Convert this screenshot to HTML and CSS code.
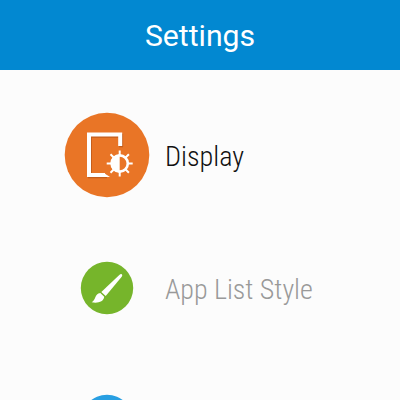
FILE: index.html
```
<!DOCTYPE html>
<html lang="en">
<head>
<meta charset="utf-8">
<title>Settings</title>
<link rel="stylesheet" href="styles.css">
</head>
<body>
<header class="header"><h1 class="title">Settings</h1></header>
<main class="list">
  <div class="row selected">
    <div class="icon-cell">
      <svg class="icon large" viewBox="0 0 86 86">
        <circle cx="43" cy="43" r="42.3" fill="#e97526"/>
        <path transform="translate(.9 1.3)" d="M56.2 34V22.5H25V63H42" fill="none" stroke="#c45d1b" stroke-width="4"/>
        <path d="M56.2 34V22.5H25V63H41" fill="none" stroke="#fff" stroke-width="4"/>
        <path d="M40 61L46 65H39V61Z" fill="#fff"/>
        <g transform="translate(55.7 51.5)">
          <path d="M0-8V-13M0 8V13M-8 0H-13M8 0H13M-5.7-5.7L-9.2-9.2M5.7-5.7L9.2-9.2M-5.7 5.7L-9.2 9.2M5.7 5.7L9.2 9.2" stroke="#fff" stroke-width="2"/>
          <circle r="8.1" fill="none" stroke="#fff" stroke-width="2.6"/>
          <path d="M0-9A9 9 0 0 0 0 9Z" fill="#fff"/>
        </g>
      </svg>
    </div>
    <span class="label">Display</span>
  </div>
  <div class="row">
    <div class="icon-cell">
      <svg class="icon" viewBox="0 0 54 54">
        <circle cx="27" cy="27" r="26.2" fill="#76b52b"/>
        <path d="M41.7 13.3C42.5 13.9 42.3 14.8 41.7 15.7L25.7 34.9L21.3 30.9L39.3 14.1C40.3 13.2 41 12.8 41.7 13.3Z" fill="#fff"/>
        <path d="M20.3 32.1L24.2 35.8C23.7 40.9 17.7 42.5 11.7 41.3C16 39.2 14.3 33.1 20.3 32.1Z" fill="#fff"/>
      </svg>
    </div>
    <span class="label">App List Style</span>
  </div>
  <div class="row">
    <div class="icon-cell">
      <svg class="icon" viewBox="0 0 54 54"><circle cx="27" cy="27" r="26.2" fill="#289fe2"/></svg>
    </div>
  </div>
</main>
</body>
</html>
```
FILE: styles.css
```
body {
  margin: 0;
  height: 400px;
  overflow: hidden;
  background: #fcfcfc;
  font-family: "Roboto", sans-serif;
}
.header {
  height: 70px;
  display: flex;
  justify-content: center;
  align-items: center;
  background: #0288d1;
}
.title {
  margin: 2px 0 0;
  color: #fff;
  font-size: 30.2px;
  font-weight: 400;
  line-height: 36px;
}
.list {
  box-sizing: border-box;
  height: 330px;
  overflow: hidden;
  padding: 19px 0 0 64px;
}
.row {
  height: 133px;
  display: flex;
  align-items: center;
  gap: 15px;
  color: #999;
}
.selected {
  color: #111;
}
.icon-cell {
  width: 86px;
  padding-bottom: 2px;
  display: flex;
  justify-content: center;
}
.icon {
  display: block;
  width: 54px;
  height: 54px;
}
.large {
  width: 86px;
  height: 86px;
}
.label {
  padding-top: 3px;
  font-family: "Roboto Condensed", "Roboto", sans-serif;
  font-stretch: 75%;
  font-size: 28px;
  font-weight: 300;
  line-height: 34px;
  white-space: nowrap;
}
.selected .label {
  font-size: 28.2px;
  font-weight: 350;
}
```
